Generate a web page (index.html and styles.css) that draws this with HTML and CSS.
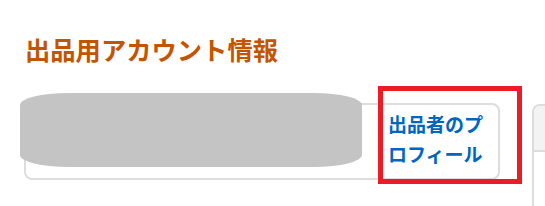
FILE: index.html
```html
<!DOCTYPE html>
<html lang="ja">
<head>
<meta charset="utf-8">
<link rel="stylesheet" href="styles.css">
</head>
<body>
<div class="page">
  <h2 class="title">出品用アカウント情報</h2>
  <div class="row">
    <div class="card card-main">
      <div class="name-area">
        <div class="redact"></div>
      </div>
      <div class="link-col">
        <a class="link" href="#">出品者のプロフィール</a>
      </div>
    </div>
    <div class="card card-next">
      <div class="card-head"></div>
    </div>
  </div>
  <div class="highlight"></div>
</div>
</body>
</html>
```

FILE: styles.css
```css
html, body {
  margin: 0;
  padding: 0;
  background: #ffffff;
  overflow: hidden;
}
.page {
  position: relative;
  width: 545px;
  height: 206px;
  padding-left: 24px;
  box-sizing: border-box;
  overflow: hidden;
  font-family: "Noto Sans CJK JP", "Noto Sans", sans-serif;
}
.title {
  margin: 0;
  padding-top: 34px;
  font-size: 25.3px;
  line-height: 30px;
  font-weight: 700;
  color: #c45500;
  padding-left: 1px;
}
.row {
  display: flex;
  gap: 32px;
  margin-top: 39px;
  align-items: flex-start;
}
.card {
  border: 2px solid #dddddd;
  border-radius: 8px;
  box-sizing: border-box;
  flex: none;
}
.card-main {
  position: relative;
  width: 476px;
  height: 77px;
  display: flex;
}
.name-area {
  width: 340px;
  flex: none;
}
.redact {
  position: absolute;
  left: -6px;
  top: -12px;
  width: 342px;
  height: 74px;
  background: #c4c4c4;
  border-radius: 48px / 12px;
}
.link-col {
  padding: 4px 0 0 22px;
  width: 100px;
}
.link {
  font-size: 19px;
  line-height: 30px;
  font-weight: 700;
  color: #0066c0;
  text-decoration: none;
}
.card-next {
  width: 13px;
  height: 110px;
  margin-top: 1px;
  border-right: none;
  border-radius: 8px 0 0 8px;
  overflow: hidden;
}
.card-head {
  height: 44px;
  background: #f3f3f3;
  border-bottom: 2px solid #dddddd;
}
.highlight {
  position: absolute;
  left: 378px;
  top: 86px;
  width: 144px;
  height: 98px;
  box-sizing: border-box;
  border: 5px solid #ed1c24;
}
```
